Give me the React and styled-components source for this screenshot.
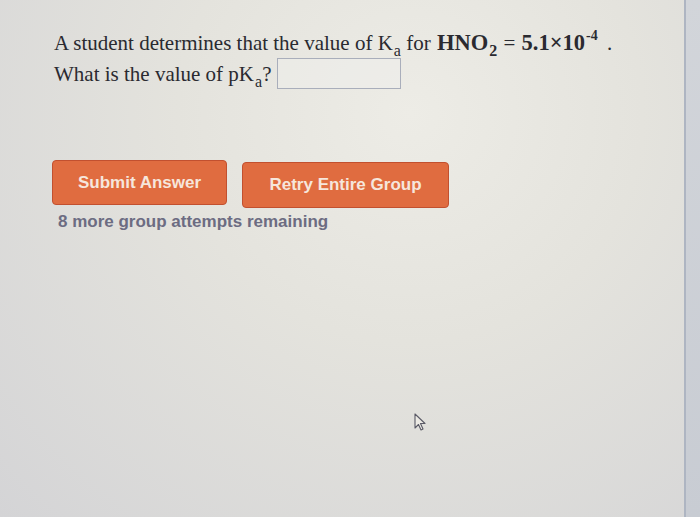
import React from 'react';
import styled, { createGlobalStyle } from 'styled-components';

const GlobalStyle = createGlobalStyle`
  html, body {
    margin: 0;
    padding: 0;
    width: 700px;
    height: 517px;
    overflow: hidden;
  }
`;

const Screen = styled.div`
  width: 700px;
  height: 517px;
  display: flex;
  background: #d9d8d6;
`;

const Page = styled.div`
  flex: 1;
  position: relative;
  padding: 28px 0 0 54px;
  background:
    radial-gradient(ellipse at 60% 22%, #edece6 0%, #e4e3dd 40%, #d4d4d6 100%);
`;

const Edge = styled.div`
  width: 14px;
  border-left: 2px solid #aeb5c2;
  background: linear-gradient(#d2d5da, #c8ccd3);
`;

const Prompt = styled.div`
  font-family: "Liberation Serif", "Times New Roman", serif;
  font-size: 21px;
  color: #2a2a30;
`;

const Line = styled.div`
  white-space: pre;
  line-height: ${p => p.h || 26}px;
  height: ${p => p.h || 26}px;
`;

const Sub = styled.sub`
  font-size: 16px;
  vertical-align: -6px;
  line-height: 0;
  margin-left: 1px;
`;

const Sup = styled.sup`
  font-size: 14px;
  vertical-align: 10px;
  line-height: 0;
  margin: 0 3px 0 1px;
`;

const Strong = styled.b`
  font-weight: 700;
  font-size: 22.5px;
  margin: 0 1px;
`;

const AnswerBox = styled.span`
  display: inline-block;
  width: 122px;
  height: 29px;
  margin-left: 6px;
  vertical-align: -8px;
  border: 1px solid #a9aebb;
  background: rgba(240, 240, 238, 0.45);
`;

const Actions = styled.div`
  display: flex;
  gap: 15px;
  margin: 70px 0 0 -2px;
  align-items: flex-start;
`;

const Button = styled.button`
  height: ${p => p.h}px;
  width: ${p => p.w}px;
  margin-top: ${p => p.offset || 0}px;
  border: 1px solid #c2502f;
  border-radius: 4px;
  background: #e06c40;
  color: #f6e6dc;
  font-family: "Liberation Sans", Arial, sans-serif;
  font-weight: 700;
  font-size: 17px;
  padding: 0;
`;

const Remaining = styled.div`
  margin: 4px 0 0 4px;
  font-family: "Liberation Sans", Arial, sans-serif;
  font-weight: 700;
  font-size: 17px;
  color: #6c6c82;
`;

const Pointer = styled.svg`
  position: absolute;
  left: 414px;
  top: 413px;
`;

const App = () => (
  <>
    <GlobalStyle />
    <Screen>
      <Page>
        <Prompt>
          <Line h={30}>
            A student determines that the value of K<Sub>a</Sub> for <Strong>HNO<Sub>2</Sub></Strong> = <Strong>5.1×10<Sup>-4</Sup></Strong> .
          </Line>
          <Line h={32}>
            What is the value of pK<Sub>a</Sub>?<AnswerBox />
          </Line>
        </Prompt>
        <Actions>
          <Button w={175} h={45}>Submit Answer</Button>
          <Button w={207} h={46} offset={2}>Retry Entire Group</Button>
        </Actions>
        <Remaining>8 more group attempts remaining</Remaining>
        <Pointer width="14" height="20" viewBox="0 0 14 20">
          <path d="M1 1 L1 15 L4.5 11.5 L7 17 L9 16 L6.5 10.5 L11 10.5 Z" fill="#eceae4" stroke="#5a5a66" strokeWidth="1.1" strokeLinejoin="round" />
        </Pointer>
      </Page>
      <Edge />
    </Screen>
  </>
);

export default App;
